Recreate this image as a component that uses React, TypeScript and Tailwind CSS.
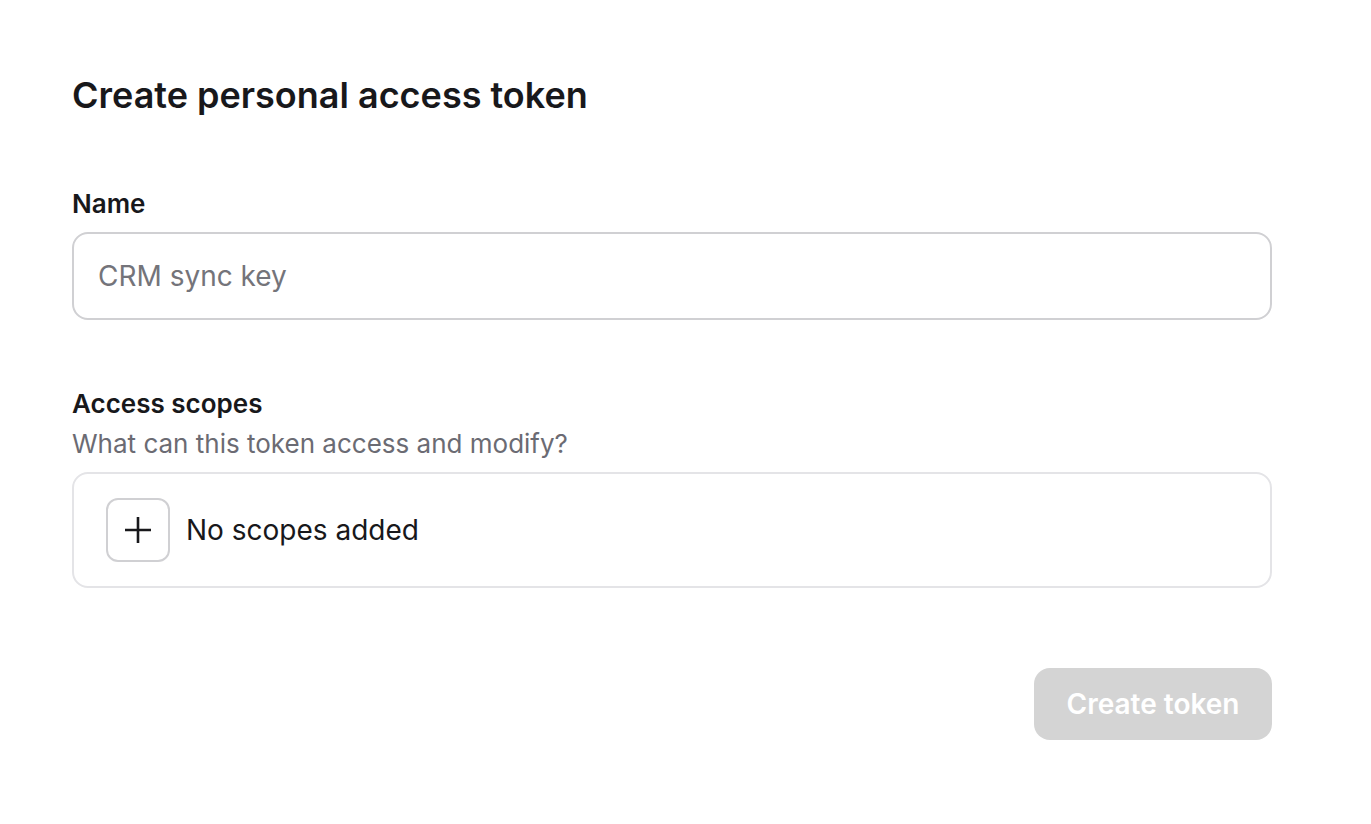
export default function App() {
  return (
    <div className="min-h-screen bg-white font-['Inter',sans-serif] text-[#18181b]">
      <div className="w-[1200px] ml-[72px] pt-[72px]">
        <h1 className="text-[36px] leading-[46px] font-semibold">Create personal access token</h1>

        {/* Name field */}
        <div className="mt-[69px]">
          <label className="block text-[26px] leading-[34px] font-semibold">Name</label>
          <input
            className="mt-[11px] w-full h-[88px] rounded-[16px] border-2 border-[#d0d0d3] px-[24px] text-[28px] outline-none placeholder:text-[#74747a]"
            placeholder="CRM sync key"
          />
        </div>

        {/* Scopes */}
        <div className="mt-[67px]">
          <div className="text-[26px] leading-[34px] font-semibold">Access scopes</div>
          <div className="mt-[6px] text-[26px] leading-[34px] text-[#6b6b73]">
            What can this token access and modify?
          </div>
          <div className="mt-[11px] h-[116px] rounded-[16px] border-2 border-[#e4e4e7] flex items-center px-[32px] gap-[16px]">
            <button className="w-[64px] h-[64px] rounded-[12px] border-2 border-[#d0d0d3] flex items-center justify-center">
              <svg width="28" height="28" viewBox="0 0 28 28" fill="none" stroke="#18181b" strokeWidth="2.6">
                <path d="M14 1v26M1 14h26" />
              </svg>
            </button>
            <span className="text-[28px]">No scopes added</span>
          </div>
        </div>

        <div className="mt-[80px] flex justify-end">
          <button className="w-[238px] h-[72px] rounded-[16px] bg-[#d4d4d4] text-white text-[28px] font-semibold">
            Create token
          </button>
        </div>
      </div>
    </div>
  );
}
